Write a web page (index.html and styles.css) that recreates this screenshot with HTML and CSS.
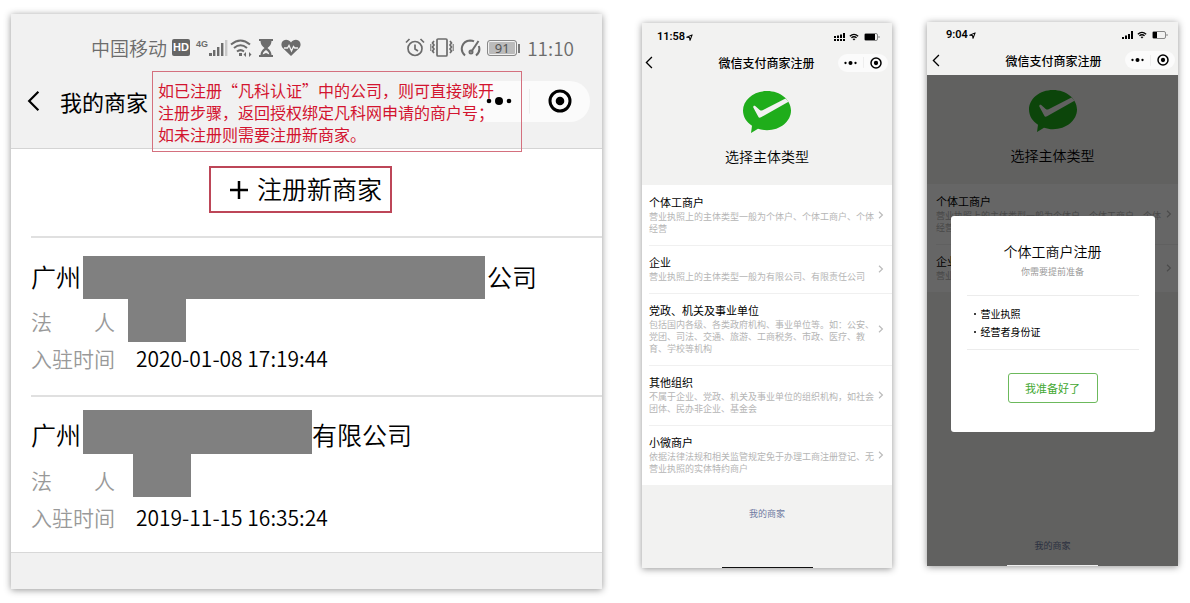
FILE: index.html
```html
<!DOCTYPE html>
<html lang="zh-CN">
<head>
<meta charset="utf-8">
<title>微信支付商家注册</title>
<link rel="stylesheet" href="styles.css">
</head>
<body>
<svg class="defs" aria-hidden="true">
  <symbol id="back" viewBox="0 0 12 20"><path d="M10.500 1.500 2 10l8.500 8.500" fill="none" stroke="currentColor" stroke-width="2"/></symbol>
  <symbol id="dots" viewBox="0 0 26 8"><circle cx="3" cy="4" r="2.300"/><circle cx="13" cy="4" r="4"/><circle cx="23" cy="4" r="2.300"/></symbol>
  <symbol id="target" viewBox="0 0 24 24"><circle cx="12" cy="12" r="10" fill="none" stroke="currentColor" stroke-width="3"/><circle cx="12" cy="12" r="4.300"/></symbol>
  <symbol id="chevron" viewBox="0 0 6 8"><path d="m1 .8 3.400 3.200L1 7.200" fill="none" stroke="currentColor" stroke-width="1.200"/></symbol>
  <symbol id="arrow" viewBox="0 0 8 8"><path d="M.8 3.600 7 1 4.600 7.200 4 4Z" fill="none" stroke="currentColor" stroke-width="1.200" stroke-linejoin="round"/></symbol>
  <symbol id="wifi" viewBox="0 0 12 9"><path d="M1 3.500q5-4.400 10 0M2.900 5.500q3.100-2.600 6.200 0" fill="none" stroke="currentColor" stroke-width="1.500"/><path d="M4.300 6.900q1.700-1.300 3.400 0L6 8.700Z"/></symbol>
  <symbol id="logo" viewBox="0 0 48 42"><path fill="#1fad1b" d="M24 0C10.700 0 0 8.700 0 19.500c0 6.400 3.500 11.600 9 15.200L8 42l7-4.300c2.800.9 5.700 1.500 9 1.500 13.300 0 24-8.900 24-19.700S37.300 0 24 0Z"/><path fill="#f2f2f1" d="M10.300 16.500c-.3-1.600 1-2.200 2.200-1.300l4.200 3.700c.9.700 1.800.8 2.900.3L42.500 7.600c1.300 1 2.200 2 3 3.200L18 26.300c-1.300.8-2.300.5-2.800-.8Z"/></symbol>
</svg>

<main class="board">
  <section class="screen screen-wide">
    <header class="wide-head">
      <div class="wide-status">
        <span>中国移动</span>
        <b class="hd">HD</b>
        <span class="network"><small>4G</small>
          <svg width="20" height="18" viewBox="0 0 20 18"><path d="M1 14h3v3H1zM5 11h2.400v6H5zM9 8h2.400v9H9zM13 4h2.400v13H13z"/><path d="M17 1h2.400v16H17z" fill="#c9c9c9"/></svg>
        </span>
        <svg class="line ic-wifi" width="22" height="18" viewBox="0 0 22 18" stroke-width="2"><path d="M1 5.500Q10.500-2.500 20 5.500M4 9Q10.500 3.500 17 9M7 12.500q3.500-2.800 7 0"/><path d="M9 15.500h3" stroke-width="3"/><path d="M13.500 15.500 16 13v5ZM21.500 15.500 19 13v5Z" fill="currentColor" stroke="none"/></svg>
        <svg class="ic-glass" width="14" height="18" viewBox="0 0 14 18"><path d="M0 0h14v2h-1.500c0 3-1.500 5-4 7 2.500 2 4 4 4 7H14v2H0v-2h1.500c0-3 1.500-5 4-7-2.500-2-4-4-4-7H0Z"/><path d="M7 11c-2 1.200-3 2.500-3.300 4.500L7 14l3.300 1.500C10 13.500 9 12.200 7 11Z" fill="#f1f1f1"/></svg>
        <svg class="ic-heart" width="20" height="18" viewBox="0 0 20 18"><path d="M10 17 2 9.300C-1 6 .4 1 5 .8c2 0 3.800.9 5 2.700C11.200 1.700 13 .8 15 .8c4.600.2 6 5.200 3 8.500Z"/><path d="M3 9h3.500L8 6.500l2.500 5.500L12.500 7.500 13.700 9H17" fill="none" stroke="#f1f1f1" stroke-width="1.300"/></svg>
        <svg class="line ic-alarm" width="20" height="19" viewBox="0 0 20 19" stroke-width="1.700"><circle cx="10" cy="10.500" r="7"/><path d="M10 6.500v4.500l3 2M1 4.500 4.500 1M19 4.500 15.500 1"/></svg>
        <svg class="line ic-vibrate" width="24" height="19" viewBox="0 0 24 19" stroke-width="1.700"><rect x="7" y="1" width="10" height="17" rx="1"/><path d="M4 3 2.500 5 4 7 2.500 9 4 11l-1.500 2L4 15M20 3l1.500 2L20 7l1.500 2-1.500 2 1.500 2-1.500 2"/><path d="M.8 6v7M23.200 6v7" stroke-width="1"/></svg>
        <svg class="line ic-gauge" width="21" height="18" viewBox="0 0 21 18" stroke-width="2"><path d="M5 16.500C-1 11 2 2 10 1.500q2.500 0 4 .8M18.800 7c1.500 4 .2 7-2.800 9.500"/><path d="m18.500 2-7 10.500"/><circle cx="11" cy="13" r="1.500"/></svg>
        <span class="battery">91</span>
        <time>11:10</time>
      </div>
      <div class="wide-nav">
        <button class="plain" aria-label="返回"><svg class="wide-back"><use href="#back"/></svg></button>
        <h1>我的商家</h1>
        <div class="capsule wide-capsule">
          <button class="plain" aria-label="更多"><svg class="dots"><use href="#dots"/></svg></button>
          <button class="plain" aria-label="关闭"><svg class="target"><use href="#target"/></svg></button>
        </div>
      </div>
      <p class="note">如已注册“凡科认证”中的公司，则可直接跳开<br>注册步骤，返回授权绑定凡科网申请的商户号；<br>如未注册则需要注册新商家。</p>
    </header>
    <div class="wide-body">
      <div class="register-row">
        <button class="register"><svg width="20" height="20" viewBox="0 0 20 20"><path d="M10 1v18M1 10h18" stroke="currentColor" stroke-width="2.500"/></svg><span>注册新商家</span></button>
      </div>
      <article class="entry">
        <h2 class="name"><span>广州</span><i class="redact redact-long"></i><span>公司</span></h2>
        <div class="field person"><span class="label"><span>法</span><span>人</span></span><i class="redact redact-short"></i></div>
        <div class="field"><span class="label">入驻时间</span><time>2020-01-08 17:19:44</time></div>
      </article>
      <article class="entry entry-low">
        <h2 class="name"><span>广州</span><i class="redact redact-mid"></i><span>有限公司</span></h2>
        <div class="field person"><span class="label"><span>法</span><span>人</span></span><i class="redact redact-short"></i></div>
        <div class="field"><span class="label">入驻时间</span><time>2019-11-15 16:35:24</time></div>
      </article>
    </div>
  </section>

  <section class="screen screen-types">
    <header class="bar">
      <div class="status"><time>11:58</time><svg class="arrow"><use href="#arrow"/></svg>
        <svg class="signal" width="12" height="8" viewBox="0 0 12 8"><path d="M0 3h2v2H0zM3 2.500h2V5H3zM6 1.500h2V5H6zM9 0h2v5H9zM0 6h2v2H0zM3 6h2v2H3zM6 6h2v2H6zM9 6h2v2H9z"/></svg>
        <svg class="wifi"><use href="#wifi"/></svg>
        <svg width="16" height="8" viewBox="0 0 16 8"><rect x=".5" y=".5" width="13" height="7" rx="1.500" fill="none" stroke="#888"/><path d="M1 1h10v6H1z"/><path d="M15 3v2" stroke="#888"/></svg>
      </div>
      <div class="nav">
        <button class="plain" aria-label="返回"><svg class="back"><use href="#back"/></svg></button>
        <h1>微信支付商家注册</h1>
        <div class="capsule">
          <button class="plain" aria-label="更多"><svg class="dots"><use href="#dots"/></svg></button>
          <button class="plain" aria-label="关闭"><svg class="target"><use href="#target"/></svg></button>
        </div>
      </div>
    </header>
    <div class="content">
      <div class="hero"><svg><use href="#logo"/></svg><h2>选择主体类型</h2></div>
      <ul class="types">
        <li><a href="#"><div><h3>个体工商户</h3><p>营业执照上的主体类型一般为个体户、个体工商户、个体经营</p></div><svg><use href="#chevron"/></svg></a></li>
        <li><a href="#"><div><h3>企业</h3><p>营业执照上的主体类型一般为有限公司、有限责任公司</p></div><svg><use href="#chevron"/></svg></a></li>
        <li><a href="#"><div><h3>党政、机关及事业单位</h3><p>包括国内各级、各类政府机构、事业单位等。如：公安、党团、司法、交通、旅游、工商税务、市政、医疗、教育、学校等机构</p></div><svg><use href="#chevron"/></svg></a></li>
        <li><a href="#"><div><h3>其他组织</h3><p>不属于企业、党政、机关及事业单位的组织机构，如社会团体、民办非企业、基金会</p></div><svg><use href="#chevron"/></svg></a></li>
        <li><a href="#"><div><h3>小微商户</h3><p>依据法律法规和相关监管规定免于办理工商注册登记、无营业执照的实体特约商户</p></div><svg><use href="#chevron"/></svg></a></li>
      </ul>
      <a class="mine" href="#">我的商家</a>
      <div class="home"></div>
    </div>
  </section>

  <section class="screen screen-dialog">
    <header class="bar">
      <div class="status"><time>9:04</time><svg class="arrow"><use href="#arrow"/></svg>
        <svg class="signal" width="12" height="8" viewBox="0 0 12 8"><path d="M0 6h2v2H0zM3 4.500h2V8H3zM6 3h2v5H6zM9 0h2v8H9z"/></svg>
        <svg class="wifi"><use href="#wifi"/></svg>
        <svg width="16" height="8" viewBox="0 0 16 8"><rect x=".5" y=".5" width="13" height="7" rx="1.500" fill="none" stroke="#888"/><path d="M1 1h4v6H1z"/><path d="M15 3v2" stroke="#888"/></svg>
      </div>
      <div class="nav">
        <button class="plain" aria-label="返回"><svg class="back"><use href="#back"/></svg></button>
        <h1>微信支付商家注册</h1>
        <div class="capsule">
          <button class="plain" aria-label="更多"><svg class="dots"><use href="#dots"/></svg></button>
          <button class="plain" aria-label="关闭"><svg class="target"><use href="#target"/></svg></button>
        </div>
      </div>
    </header>
    <div class="content">
      <div class="hero"><svg><use href="#logo"/></svg><h2>选择主体类型</h2></div>
      <ul class="types">
        <li><a href="#"><div><h3>个体工商户</h3><p>营业执照上的主体类型一般为个体户、个体工商户、个体经营</p></div><svg><use href="#chevron"/></svg></a></li>
        <li><a href="#"><div><h3>企业</h3><p>营业执照</p></div><svg><use href="#chevron"/></svg></a></li>
      </ul>
      <a class="mine" href="#">我的商家</a>
      <div class="home"></div>
      <div class="overlay">
        <div class="dialog" role="dialog" aria-labelledby="dialog-title">
          <h2 id="dialog-title">个体工商户注册</h2>
          <p>你需要提前准备</p>
          <ul><li>营业执照</li><li>经营者身份证</li></ul>
          <button>我准备好了</button>
        </div>
      </div>
    </div>
  </section>
</main>
</body>
</html>
```
FILE: styles.css
```css
* { box-sizing: border-box; }
body, h1, h2, h3, p, ul { margin: 0; padding: 0; }
body {
  background: #fff;
  color: #000;
  font-family: "Noto Sans CJK SC", sans-serif;
}
h1, h2, h3 { font-weight: 400; }
ul { list-style: none; }
a { color: inherit; text-decoration: none; }
svg { display: block; flex: none; fill: currentColor; }
button { font-family: inherit; color: inherit; }
.defs { position: absolute; width: 0; height: 0; }
.plain { display: flex; padding: 0; border: 0; background: none; }
.line { fill: none; stroke: currentColor; }

.board { display: flex; align-items: flex-start; padding: 14px 12px 14px 11px; }
.screen {
  display: flex;
  flex-direction: column;
  background: #f2f2f1;
  box-shadow: 0 1px 7px rgba(0, 0, 0, .42);
}
.screen-wide { flex: 591 1 0; min-height: 575px; background: #f1f1f1; }
.screen-types { flex: 250 1 0; min-height: 545px; margin: 9px 0 0 40px; }
.screen-dialog { flex: 251 1 0; min-height: 544px; margin: 8px 0 0 35px; }

/* Merchant list */
.wide-head { position: relative; padding-bottom: 27px; border-bottom: 1px solid #d4d4d4; }
.wide-status {
  display: flex;
  align-items: center;
  height: 67px;
  padding: 0 28px 0 80px;
  color: #6c6c6c;
  font-size: 19px;
  font-weight: 350;
}
.hd {
  margin-left: 5px;
  width: 18px;
  border-radius: 2px;
  background: #666;
  color: #fff;
  font: 700 11px/17px "Liberation Sans", sans-serif;
  text-align: center;
}
.network { display: flex; margin-left: 6px; }
.network small { font: 700 9px/10px "Liberation Sans", sans-serif; }
.ic-wifi { margin-left: 2px; }
.ic-glass { margin-left: 7px; }
.ic-heart { margin-left: 8px; }
.ic-alarm { margin-left: auto; }
.ic-vibrate { margin-left: 5px; }
.ic-gauge { margin-left: 6px; }
.battery {
  position: relative;
  width: 30px;
  margin: 0 10px 0 6px;
  border: 1px solid #888;
  border-radius: 3px;
  background: #bbb;
  box-shadow: inset 0 0 0 1px #f1f1f1;
  color: #555;
  font: 400 13px/14px "Noto Sans", sans-serif;
  text-align: center;
}
.battery::after {
  content: "";
  position: absolute;
  top: 3px;
  right: -4px;
  width: 2px;
  height: 9px;
  background: #777;
}
.wide-nav { display: flex; align-items: center; height: 40px; padding: 0 12px 0 16px; }
.wide-back { width: 13px; height: 22px; }
.wide-nav h1 { margin-left: 20px; font-size: 22px; line-height: 30px; }
.capsule {
  display: flex;
  align-items: center;
  justify-content: space-around;
  margin-left: auto;
  border-radius: 20px;
  background: linear-gradient(#eee, #eee) center / 1px 60% no-repeat #fbfbfb;
}
.note {
  position: absolute;
  top: 57px;
  left: 141px;
  width: 370px;
  padding: 7px 5px 6px;
  border: 1px solid #d4707e;
  color: #d3142f;
  font-size: 16px;
  line-height: 22px;
  white-space: nowrap;
}
.wide-body { background: #fff; border-bottom: 1px solid #d8d8d8; }
.register-row { display: flex; justify-content: center; padding: 17px 12px 23px 0; }
.register {
  display: flex;
  align-items: center;
  gap: 8px;
  height: 47px;
  padding: 0 8px 0 18px;
  border: 2px solid #bd4658;
  background: #fff;
  font-size: 25px;
  font-weight: 350;
}
.register span { padding-bottom: 3px; }
.entry { margin-left: 20px; padding: 18px 0; border-top: 2px solid #e0e0e0; }
.name { display: flex; align-items: center; height: 43px; font-size: 25px; font-weight: 350; line-height: 30px; }
.name span { padding-bottom: 4px; }
.redact { align-self: stretch; background: #808080; }
.redact-long { width: 402px; margin: 0 2px; }
.redact-mid { width: 229px; margin-left: 2px; }
.redact-short { width: 58px; }
.field { display: flex; align-items: center; height: 35px; padding-bottom: 4px; font-size: 21px; }
.person { height: 43px; padding-bottom: 0; }
.label { display: flex; justify-content: space-between; width: 84px; color: #999; font-weight: 350; }
.person .redact { margin-left: 13px; }
.field time { margin-left: 21px; font-weight: 350; }
.entry-low { padding: 13px 0 14px; }
.entry-low .name { height: 44px; }
.entry-low .name span { padding: 4px 0 0; }
.entry-low .person .label { padding-top: 8px; }
.entry-low .person .redact { margin-left: 18px; }
.entry-low .field:last-child { height: 41px; padding-bottom: 2px; }

/* Phone header */
.status { display: flex; align-items: center; height: 28px; padding: 0 12px 0 15px; }
.status time { font: 600 11px/14px Roboto, sans-serif; }
.arrow { width: 7px; height: 7px; margin-left: 1px; }
.signal { margin-left: auto; }
.wifi { width: 10px; height: 8px; margin: 0 5px 0 3px; }
.screen-dialog .status { height: 26px; padding-left: 19px; padding-right: 10px; }
.nav {
  display: grid;
  grid-template-columns: 1fr auto 1fr;
  align-items: center;
  height: 25px;
  padding: 0 4px 2px 3px;
}
.screen-dialog .nav { height: 27px; padding: 0 3px 3px 5px; }
.back { width: 8px; height: 13px; }
.nav h1 { font-size: 12px; font-weight: 500; }
.nav .capsule { width: 50px; height: 18px; }
.dots { width: 13px; height: 4px; }
.target { width: 12px; height: 12px; }
.wide-capsule { width: 122px; height: 41px; }
.wide-capsule .dots { width: 26px; height: 8px; }
.wide-capsule .target { width: 24px; height: 24px; }

/* Type picker */
.content { position: relative; display: flex; flex: 1; flex-direction: column; }
.hero { display: flex; flex-direction: column; align-items: center; padding: 15px 0 19px; }
.hero svg { width: 48px; height: 42px; }
.hero h2 { margin-top: 13px; font-size: 14px; font-weight: 350; line-height: 20px; }
.types { background: #fff; }
.types li { margin-left: 7px; }
.screen-dialog .types li { margin-left: 9px; }
.types li + li { border-top: 1px solid #f0f0f0; }
.types a { display: flex; align-items: center; padding: 9px 8px 10px 0; }
.screen-dialog .types a { padding-right: 6px; }
.types li + li a { padding-top: 8px; }
.types div { flex: 1; padding-right: 3px; }
.types h3 { font-size: 11px; line-height: 16px; }
.types p { margin-top: 1px; color: #b5b5b5; font-size: 9px; line-height: 12px; }
.types svg { width: 6px; height: 8px; color: #bbb; }
.mine { align-self: center; margin-top: 22px; color: #6f7ba2; font-size: 9px; line-height: 14px; }
.screen-dialog .mine { margin-top: auto; padding-bottom: 12px; }
.home { width: 91px; height: 1px; margin: auto auto 0; background: #111; }
.screen-dialog .home { position: relative; z-index: 1; margin-top: 0; background: #eee; }

/* Preparation dialog */
.overlay {
  position: absolute;
  inset: 0;
  display: flex;
  align-items: flex-start;
  justify-content: center;
  padding-top: 141px;
  background: rgba(0, 0, 0, .6);
}
.dialog {
  display: flex;
  flex-direction: column;
  align-items: center;
  width: 204px;
  padding: 25px 16px 29px;
  border-radius: 3px;
  background: #fff;
}
.dialog h2 { font-size: 14px; font-weight: 350; line-height: 20px; }
.dialog p { margin-top: 4px; color: #999; font-size: 9px; line-height: 14px; }
.dialog ul {
  align-self: stretch;
  margin: 16px 0 23px;
  padding: 9px 7px 8px;
  border: solid #ececec;
  border-width: 1px 0;
}
.dialog li { display: flex; font-size: 10px; line-height: 18px; }
.dialog li::before { content: ""; align-self: center; width: 2px; height: 2px; margin-right: 5px; border-radius: 50%; background: #000; }
.dialog button {
  width: 90px;
  height: 30px;
  padding: 0;
  border: 1px solid #6cb95c;
  border-radius: 3px;
  background: #fff;
  color: #43a832;
  font-size: 11px;
}
```
